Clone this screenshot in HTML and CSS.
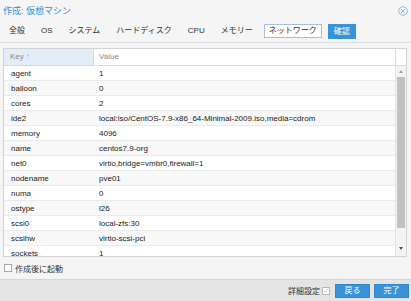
FILE: index.html
```html
<!DOCTYPE html>
<html lang="ja">
<head>
  <meta charset="UTF-8">
  <title>作成: 仮想マシン</title>
  <link rel="stylesheet" href="styles.css">
</head>
<body>

  <div class="ventana">
    <!-- Título -->
    <div class="cabecera">
      <span class="titulo">作成: 仮想マシン</span>
      <svg class="cerrar" width="10" height="10" viewBox="0 0 10 10">
        <circle cx="5" cy="5" r="4.3" fill="none" stroke="#8fbbe2" stroke-width="1"/>
        <path d="M3.2 3.2 L6.8 6.8 M6.8 3.2 L3.2 6.8" stroke="#8fbbe2" stroke-width="1"/>
      </svg>
    </div>

    <!-- Pestañas -->
    <div class="pestanas">
      <span class="pestana">全般</span>
      <span class="pestana">OS</span>
      <span class="pestana">システム</span>
      <span class="pestana">ハードディスク</span>
      <span class="pestana">CPU</span>
      <span class="pestana">メモリー</span>
      <span class="pestana activa">ネットワーク</span>
      <span class="pestana boton">確認</span>
    </div>

    <div class="cuerpo">
      <div class="tabla">
        <div class="encabezado">
          <div class="col-clave">Key <span class="flecha">↑</span></div>
          <div class="col-valor">Value</div>
          <div class="col-barra"></div>
        </div>
        <div class="contenido">
          <div class="filas">
            <div class="fila"><span class="clave">agent</span><span class="valor">1</span></div>
            <div class="fila"><span class="clave">balloon</span><span class="valor">0</span></div>
            <div class="fila"><span class="clave">cores</span><span class="valor">2</span></div>
            <div class="fila"><span class="clave">ide2</span><span class="valor">local:iso/CentOS-7.9-x86_64-Minimal-2009.iso,media=cdrom</span></div>
            <div class="fila"><span class="clave">memory</span><span class="valor">4096</span></div>
            <div class="fila"><span class="clave">name</span><span class="valor">centos7.9-org</span></div>
            <div class="fila"><span class="clave">net0</span><span class="valor">virtio,bridge=vmbr0,firewall=1</span></div>
            <div class="fila"><span class="clave">nodename</span><span class="valor">pve01</span></div>
            <div class="fila"><span class="clave">numa</span><span class="valor">0</span></div>
            <div class="fila"><span class="clave">ostype</span><span class="valor">l26</span></div>
            <div class="fila"><span class="clave">scsi0</span><span class="valor">local-zfs:30</span></div>
            <div class="fila"><span class="clave">scsihw</span><span class="valor">virtio-scsi-pci</span></div>
            <div class="fila"><span class="clave">sockets</span><span class="valor">1</span></div>
          </div>
          <div class="barra">
            <div class="triangulo arriba"></div>
            <div class="pulgar"></div>
            <div class="triangulo abajo"></div>
          </div>
        </div>
      </div>

      <div class="arranque">
        <span class="casilla"></span>
        <span>作成後に起動</span>
      </div>
    </div>

    <!-- Pie -->
    <div class="pie">
      <span class="detalle">詳細設定</span>
      <span class="casilla marcada">
        <svg width="8" height="8" viewBox="0 0 8 8">
          <path d="M1.5 4.2 L3.2 5.8 L6.6 1.8" fill="none" stroke="#9aa4ad" stroke-width="0.9"/>
        </svg>
      </span>
      <button class="accion atras">戻る</button>
      <button class="accion">完了</button>
    </div>
  </div>

</body>
</html>
```

FILE: styles.css
```css
* {
  box-sizing: border-box;
}

body {
  margin: 0;
  font-family: "Liberation Sans", Arial, "Noto Sans CJK JP", sans-serif;
  font-size: 8px;
  color: #333;
  background-color: #f5f5f5;
}

.ventana {
  width: 411px;
  height: 301px;
  display: flex;
  flex-direction: column;
  overflow: hidden;
}

.cabecera {
  height: 20px;
  display: flex;
  align-items: center;
  justify-content: space-between;
  padding: 0 3px 0 3px;
}

.titulo {
  font-size: 9px;
  color: #3a8fd4;
}

.cerrar {
  display: block;
  margin-top: 1px;
}

.pestanas {
  height: 23px;
  display: flex;
  align-items: center;
  padding: 0 0 0 1px;
  border-bottom: 1px solid #dedede;
}

.pestana {
  margin: 0 3px;
  padding: 0 4px;
  height: 14px;
  line-height: 12px;
  border: 1px solid transparent;
  color: #333;
  white-space: nowrap;
}

.pestana.activa {
  background-color: #fff;
  border-color: #a6bfd6;
}

.pestana.boton {
  background-color: #3a93d8;
  border-color: #3a93d8;
  color: #fff;
  padding: 0 5px;
  height: 15px;
  line-height: 13px;
}

.cuerpo {
  height: 236px;
  padding: 5px 4px 0 3px;
}

.tabla {
  height: 209px;
  border: 1px solid #d3d3d3;
  background-color: #fff;
  display: flex;
  flex-direction: column;
}

.encabezado {
  height: 17px;
  display: flex;
  border-bottom: 1px solid #d9d9d9;
  color: #8a8a8a;
}

.encabezado div {
  line-height: 16px;
}

.col-clave {
  width: 90px;
  padding-left: 6px;
  background-color: #e2edf8;
  border-right: 1px solid #d9d9d9;
}

.flecha {
  color: #b0b0b0;
}

.col-valor {
  flex: 1;
  padding-left: 5px;
  border-right: 1px solid #d9d9d9;
}

.col-barra {
  width: 10px;
}

.contenido {
  flex: 1;
  display: flex;
  overflow: hidden;
}

.filas {
  flex: 1;
  overflow: hidden;
}

.fila {
  height: 15px;
  display: flex;
  align-items: center;
  border-bottom: 1px solid #ebebeb;
  color: #222;
  white-space: nowrap;
}

.fila:nth-child(even) {
  background-color: #f8f8f8;
}

.clave {
  width: 90px;
  padding-left: 7px;
}

.valor {
  padding-left: 5px;
}

.barra {
  width: 11px;
  border-left: 1px solid #e3e3e3;
  background-color: #f3f3f3;
  display: flex;
  flex-direction: column;
  align-items: center;
  padding: 4px 0 4px 0;
}

.triangulo {
  width: 0;
  height: 0;
  border-left: 2.5px solid transparent;
  border-right: 2.5px solid transparent;
}

.triangulo.arriba {
  border-bottom: 3px solid #a3a3a3;
}

.triangulo.abajo {
  border-top: 3px solid #505050;
}

.pulgar {
  width: 8px;
  height: 151px;
  margin: 4px 0 19px 0;
  background-color: #c1c1c1;
}

.arranque {
  height: 22px;
  display: flex;
  align-items: center;
  gap: 3px;
  padding-left: 1px;
  color: #333;
}

.casilla {
  width: 8px;
  height: 8px;
  border: 1px solid #a8a8a8;
  background-color: #fff;
  display: flex;
  align-items: center;
  justify-content: center;
}

.casilla svg {
  display: block;
}

.pie {
  height: 22px;
  background-color: #e4e4e4;
  border-top: 1px solid #d6d6d6;
  display: flex;
  align-items: center;
  justify-content: flex-end;
  padding-right: 2px;
}

.detalle {
  margin-right: 2px;
  color: #333;
}

.pie .casilla {
  margin-right: 5px;
  border-color: #b5b5b5;
}

.accion {
  width: 35px;
  height: 14px;
  padding: 0;
  margin-left: 4px;
  border: 1px solid #3088cc;
  background-color: #3a93d8;
  color: #fff;
  font-family: inherit;
  font-size: 8px;
  line-height: 12px;
}

.accion.atras {
  margin-left: 0;
}
```
